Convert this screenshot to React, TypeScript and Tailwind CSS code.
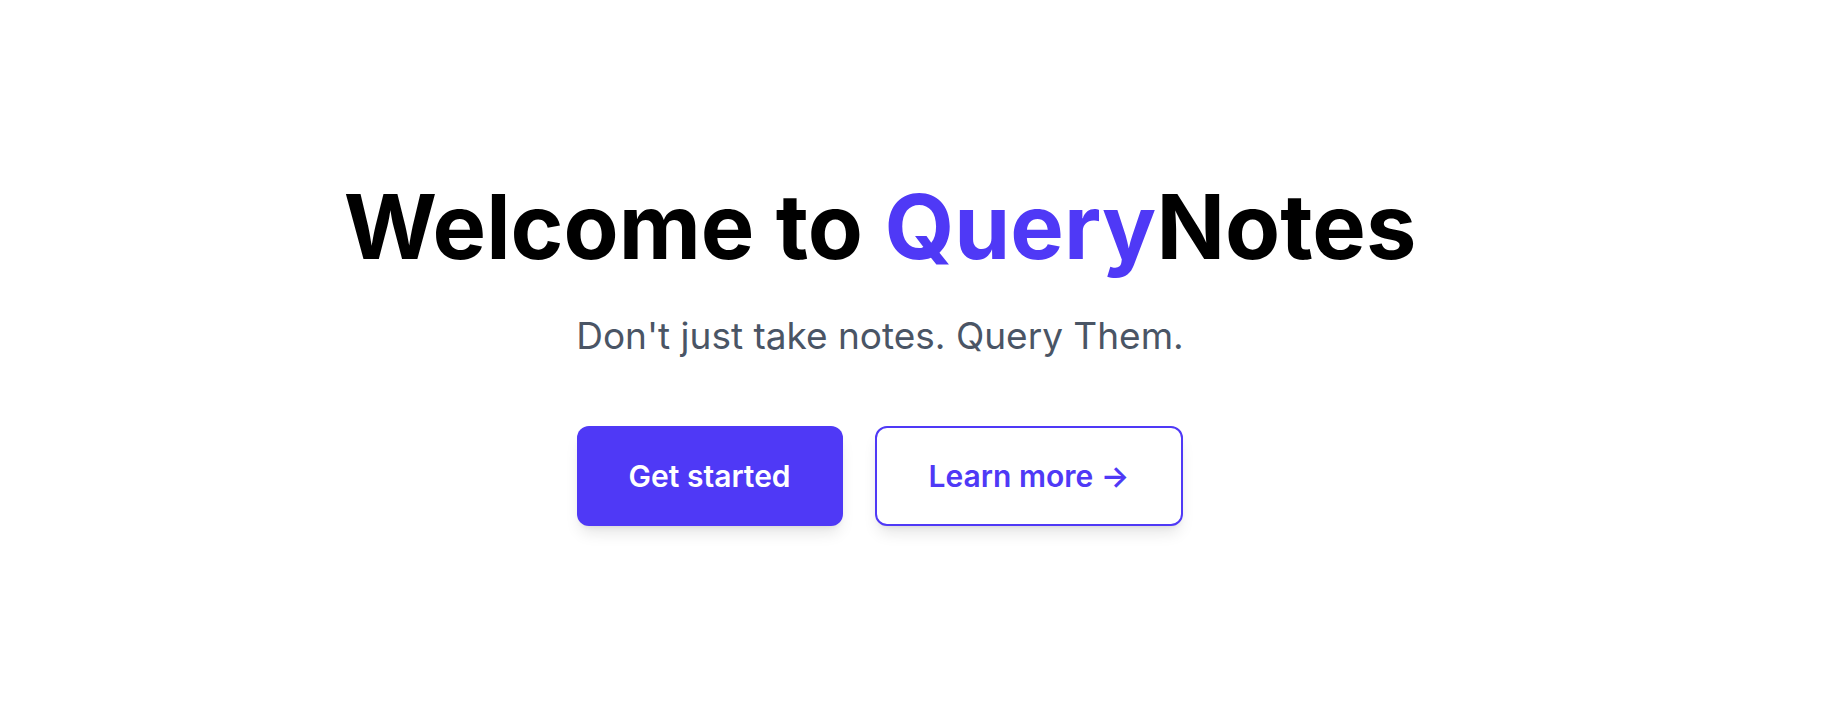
import React from 'react';

export default function App() {
  return (
    <div className="min-h-screen bg-white flex items-center justify-center pr-[70px] pb-4 font-['Inter',sans-serif]">
      <div className="flex flex-col items-center text-center">
        <h1 className="text-[90px] leading-none font-bold text-black">
          Welcome to <span className="text-[#4f39f6]">Query</span>Notes
        </h1>
        <p className="mt-11 text-[37px] leading-10 text-gray-600">Don't just take notes. Query Them.</p>
        <div className="mt-[70px] flex items-center gap-8">
          <button className="rounded-xl bg-[#4f39f6] px-[52px] py-8 text-3xl font-semibold text-white shadow-lg">
            Get started
          </button>
          <button className="rounded-xl border-2 border-[#4f39f6] bg-white px-[52px] py-[30px] text-3xl font-semibold text-[#4f39f6] shadow-lg">
            Learn more <span aria-hidden="true">→</span>
          </button>
        </div>
      </div>
    </div>
  );
}
